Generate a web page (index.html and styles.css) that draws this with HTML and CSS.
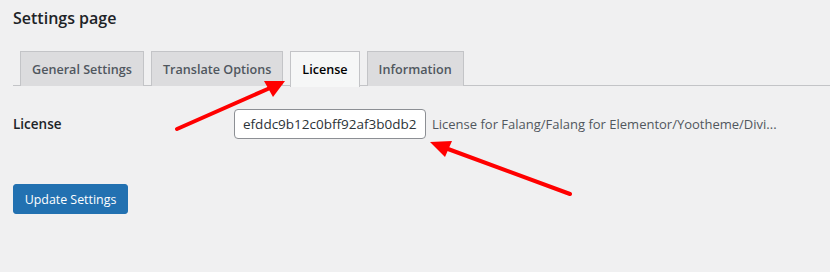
FILE: index.html
```html
<!DOCTYPE html>
<html lang="en">
<head>
    <meta charset="UTF-8">
    <title>Settings page</title>
    <link rel="stylesheet" href="styles.css">
</head>
<body>
    <div class="wrap">
        <h1 class="page-title">Settings page</h1>

        <nav class="nav-tabs">
            <a class="nav-tab">General Settings</a>
            <a class="nav-tab">Translate Options</a>
            <a class="nav-tab active">License</a>
            <a class="nav-tab">Information</a>
        </nav>

        <div class="form-row">
            <label class="form-label" for="license">License</label>
            <div class="form-field">
                <input id="license" class="license-input" type="text" value="efddc9b12c0bff92af3b0db23a7e41c5">
                <span class="description">License for Falang/Falang for Elementor/Yootheme/Divi...</span>
            </div>
        </div>

        <div class="submit-row">
            <button class="button-primary">Update Settings</button>
        </div>
    </div>

    <!-- annotation arrows -->
    <svg class="annotations" width="830" height="272" viewBox="0 0 830 272">
        <line x1="177" y1="129" x2="270" y2="88" stroke="#ff0000" stroke-width="4" stroke-linecap="round"/>
        <polygon points="285,81 264,81 273,97" fill="#ff0000"/>
        <line x1="570" y1="194" x2="448" y2="149" stroke="#ff0000" stroke-width="4" stroke-linecap="round"/>
        <polygon points="430,142 452,141 445,157" fill="#ff0000"/>
    </svg>
</body>
</html>
```

FILE: styles.css
```css
* {
    margin: 0;
    padding: 0;
    box-sizing: border-box;
}

body {
    font-family: "Open Sans", "Noto Sans", sans-serif;
    font-size: 13px;
    background: #f0f0f1;
    color: #3c434a;
    width: 830px;
    height: 272px;
    position: relative;
    overflow: hidden;
}

.wrap {
    padding: 7px 0 0 13px;
}

.page-title {
    font-size: 16px;
    font-weight: 600;
    color: #1d2327;
    line-height: 22px;
}

/* tabs */
.nav-tabs {
    margin-top: 22px;
    padding-left: 7px;
    display: flex;
    gap: 7px;
    border-bottom: 1px solid #c3c4c7;
    height: 35px;
}

.nav-tab {
    height: 35px;
    padding: 0 11px;
    display: flex;
    align-items: center;
    font-size: 12.6px;
    font-weight: 600;
    color: #50575e;
    background: #dcdcde;
    border: 1px solid #c3c4c7;
    border-bottom: none;
    white-space: nowrap;
}

.nav-tab.active {
    background: #f6f7f7;
    color: #000;
    height: 36px;
}

/* form */
.form-row {
    display: flex;
    align-items: center;
    margin-top: 23px;
}

.form-label {
    width: 221px;
    font-size: 13.5px;
    font-weight: 600;
    color: #1d2327;
}

.form-field {
    display: flex;
    align-items: center;
    gap: 6px;
}

.license-input {
    width: 192px;
    height: 30px;
    padding: 0 8px;
    font-family: inherit;
    font-size: 13.5px;
    color: #2c3338;
    background: #fff;
    border: 1px solid #8c8f94;
    border-radius: 4px;
}

.description {
    font-size: 13px;
    color: #50575e;
}

.submit-row {
    margin-top: 45px;
}

.button-primary {
    height: 30px;
    width: 115px;
    white-space: nowrap;
    font-family: inherit;
    font-size: 12.4px;
    color: #fff;
    background: #2271b1;
    border: 1px solid #2271b1;
    border-radius: 3px;
}

.annotations {
    position: absolute;
    top: 0;
    left: 0;
}
```
